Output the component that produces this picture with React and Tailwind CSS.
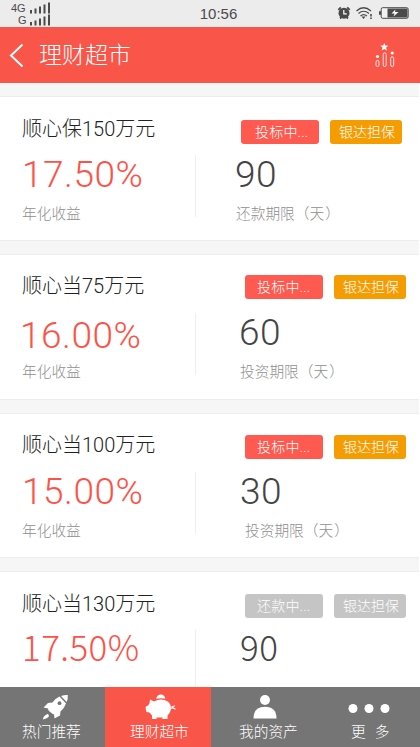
import clsx from 'clsx';

const projects = [
    {
        title: '顺心保150万元',
        rate: '17.50%',
        days: '90',
        status: '投标中...',
        term: '还款期限（天',
        card: 'h-[145px]',
        titleCls: 'pt-[17px]',
        tagsCls: 'ml-[241px] pt-[23px]',
        statusCls: 'pl-[14px]',
        rateCls: 'pl-[22px]',
        daysCls: 'pl-[39px]',
        termCls: 'pl-[40px]',
    },
    {
        title: '顺心当75万元',
        rate: '16.00%',
        days: '60',
        status: '投标中...',
        term: '投资期限（天',
        card: 'h-[146px]',
        titleCls: 'pt-[16px]',
        tagsCls: 'ml-[245px] pt-[20px]',
        statusCls: 'pl-[12px]',
        rateCls: 'pl-[20px] pt-[3px]',
        daysCls: 'pl-[43px]',
        termCls: 'pl-[44px]',
    },
    {
        title: '顺心当100万元',
        rate: '15.00%',
        days: '30',
        status: '投标中...',
        term: '投资期限（天',
        card: 'h-[145px]',
        titleCls: 'pt-[16px]',
        tagsCls: 'ml-[245px] pt-[21px]',
        statusCls: 'pl-[12px]',
        rateCls: 'pl-[22px]',
        daysCls: 'pl-[44px]',
        termCls: 'pl-[49px]',
    },
    {
        title: '顺心当130万元',
        rate: '17.50%',
        days: '90',
        status: '还款中...',
        closed: true,
        card: 'h-[145px]',
        titleCls: 'pt-[17px]',
        tagsCls: 'ml-[245px] pt-[22px]',
        statusCls: 'pl-[12px]',
        rateCls: 'pl-[22px]',
        daysCls: 'pl-[44px]',
    },
];

const SignalBars = () => (
    <svg width="21" height="12" viewBox="0 0 21 12" fill="#4a4a4a">
        <rect x="0" y="8" width="2" height="3.5" />
        <rect x="4.5" y="6.5" width="2" height="5" />
        <rect x="9" y="4.5" width="2" height="7" />
        <rect x="13.5" y="2.5" width="2" height="9" />
        <rect x="18" y="0.5" width="2" height="11" />
    </svg>
);

const StatusBar = () => (
    <div className="relative h-[27px] shrink-0 bg-[#ececec] font-['Liberation_Sans',sans-serif] text-[#4a4a4a]">
        <div className="absolute top-[2px] left-[11px] w-[40px] text-[11px] leading-[13px]">
            <div className="flex h-[12px] justify-between">
                <span>4G</span>
                <SignalBars />
            </div>
            <div className="flex h-[12px] justify-between">
                <span className="pl-[7px]">G</span>
                <SignalBars />
            </div>
        </div>
        <div className="pl-[17px] text-center text-[15px] leading-[27px]">10:56</div>
        <div className="absolute top-[6px] right-[11px] flex items-center">
            <svg width="14" height="14" viewBox="0 0 14 14">
                <path d="M1.300 3.800 3.800 1.300M12.700 3.800 10.200 1.300M3 12.500l1.500-1.500M11 12.500l-1.500-1.500" stroke="#4a4a4a" strokeWidth="1.800" />
                <circle cx="7" cy="7.2" r="5.5" fill="#4a4a4a" />
                <path d="M6.8 4v3.8h3" stroke="#fff" strokeWidth="1.2" fill="none" />
            </svg>
            <svg className="ml-[5px]" width="17" height="14" viewBox="0 0 17 14" fill="none" stroke="#4a4a4a">
                <path d="M.5 5Q7.5-1.5 15 5M2.5 7.5Q7.5 3 13 7.5M4.5 10Q7.5 7.2 11 10" strokeWidth="1.2" />
                <path d="M5.5 10.5h4l-2 2.5z" fill="#4a4a4a" stroke="none" />
                <path d="M15 8v2.5M15 11.5v1.5" strokeWidth="1.6" />
            </svg>
            <svg className="ml-[6px]" width="30" height="12" viewBox="0 0 30 12">
                <rect x="0" y="4" width="2" height="4" rx="1" fill="#4a4a4a" />
                <rect x="2.2" y=".7" width="27" height="10.6" rx="1.5" fill="#f2f2f2" stroke="#4a4a4a" strokeWidth="1" />
                <rect x="8.5" y="1.500" width="20" height="9" fill="#4a4a4a" />
                <path d="M16.500 2.500l-4 4h3l-1 3 5-4.500h-3.500z" fill="#fff" />
            </svg>
        </div>
    </div>
);

const Header = () => (
    <header className="flex h-[56px] shrink-0 items-center bg-[#f95549] text-white">
        <svg className="ml-[9px]" width="16" height="26" viewBox="0 0 16 26" fill="none" stroke="#fff" strokeWidth="2">
            <path d="M13.5 2.5 2 13.5 13.5 24.5" />
        </svg>
        <h1 className="mt-[2px] ml-[14px] text-[23px] leading-[54px] font-light">理财超市</h1>
        <svg className="mr-[25px] ml-auto" width="20" height="25" viewBox="0 0 20 25" fill="none" stroke="#fff">
            <path
                d="M9.3 0l1.1 2.5 2.9.2-2.2 1.900.8 2.900-2.600-1.600L6.700 7.500l.8-2.900-2.200-1.900 2.900-.2z"
                fill="#fff"
                stroke="none"
            />
            <circle cx="2.5" cy="13.5" r="1.6" fill="#fff" stroke="none" />
            <circle cx="17.2" cy="10" r="1.6" fill="#fff" stroke="none" />
            <g strokeOpacity=".85">
                <rect x="1" y="17.5" width="3" height="6" rx="1.5" />
                <rect x="8.2" y="9.8" width="3" height="13.7" rx="1.5" />
                <rect x="15.7" y="13.8" width="3" height="9.7" rx="1.5" />
            </g>
        </svg>
    </header>
);

const ProjectCard = ({ item }) => {
    // closed projects keep the CJK face for their figures
    const figure = item.closed
        ? "font-['Noto_Sans_CJK_SC',sans-serif] text-[35px] leading-[32px] tracking-[0.4px]"
        : "font-['Roboto',sans-serif] text-[37px] leading-[40px] tracking-[0.5px]";

    return (
        <section className={clsx('shrink-0 overflow-hidden border-y border-[#ededed] bg-white', item.card)}>
            <div className="grid h-[58px] grid-cols-1">
                <h2
                    className={clsx(
                        'col-start-1 row-start-1 pl-[22px] text-[20px] leading-[30px] font-light text-[#222]',
                        item.titleCls
                    )}
                >
                    {item.title}
                </h2>
                <div
                    className={clsx(
                        'col-start-1 row-start-1 flex gap-[11px] text-[14px] leading-[24px] font-light text-white',
                        item.tagsCls
                    )}
                >
                    <span
                        className={clsx(
                            'h-[24px] w-[78px] rounded-[3px] tracking-[0.2px]',
                            item.closed ? 'bg-[#c5c5c5]' : 'bg-[#ff5a50]',
                            item.statusCls
                        )}
                    >
                        {item.status}
                    </span>
                    <span
                        className={clsx(
                            'h-[24px] w-[72px] rounded-[3px] pl-[9px]',
                            item.closed ? 'bg-[#c5c5c5]' : 'bg-[#f59c00]'
                        )}
                    >
                        银达担保
                    </span>
                </div>
            </div>
            <div className="flex h-[62px] font-light">
                <div className="w-[196px] shrink-0 border-r border-[#efefef]">
                    <p className={clsx('h-[40px] text-[#ff5247]', figure, item.rateCls)}>{item.rate}</p>
                    {item.term && (
                        <p className="pl-[22px] text-[14.7px] leading-[39px] text-[#8f8f8f]">年化收益</p>
                    )}
                </div>
                <div>
                    <p className={clsx('h-[40px] text-[#444]', figure, item.daysCls)}>{item.days}</p>
                    {item.term && (
                        <p className={clsx('text-[14.7px] leading-[39px] text-[#8f8f8f]', item.termCls)}>
                            {item.term}
                            <span className="ml-px">）</span>
                        </p>
                    )}
                </div>
            </div>
        </section>
    );
};

const RocketIcon = () => (
    <svg width="27" height="26" viewBox="0 0 27 26" fill="#fff">
        <path d="M17.500 2.500 24 9.500Q22.500 14 18.500 17.500L18 21.500 12.500 24.500 12 20.500 10 19.500 6.500 16.500 6 14.500 1.500 13.500 6 9 10.500 8.500Q13 4.500 17.500 2.500z" />
        <path d="M19 2Q22.500 .8 25.800 1 26.100 4.500 24.600 8z" />
        <path d="M5.500 20Q7.500 20.500 6.500 23 4.500 24.800.8 25.500 1.200 21.500 5.500 20z" />
        <circle cx="17.500" cy="9.200" r="1.900" fill="#757575" />
    </svg>
);

const PigIcon = () => (
    <svg width="31" height="26" viewBox="0 0 31 26" fill="#fff">
        <path d="M11.300 4.800A4.500 4.300 0 0 1 20.300 4.800Q15.800 3.600 11.300 4.800z" />
        <path d="M5 5.500 9 7.500Q12.500 5.400 16 5.400 25.500 5.800 26 13.500 26 18 22.500 21.500V25H17.500V23.500H11.500V25H7V21.500L4.500 18.500 1.500 18Q.3 15.500.8 12.500L3.200 11.500Q3.500 10.500 4.500 9.500z" />
        <path d="M25.5 14Q28 14.500 29.500 11.500M27 12Q27.500 15 30.500 14.800" fill="none" stroke="#fff" strokeWidth="1.2" />
    </svg>
);

const PersonIcon = () => (
    <svg width="24" height="26" viewBox="0 0 24 26" fill="#fff">
        <circle cx="12" cy="6" r="5" />
        <path d="M.5 24.500Q.5 12.800 12 12.800T23.500 24.500z" />
    </svg>
);

const MoreIcon = () => (
    <svg width="42" height="26" viewBox="0 0 42 26" fill="#fff">
        <circle cx="5" cy="14.5" r="4.5" />
        <circle cx="21" cy="14.5" r="4.5" />
        <circle cx="37" cy="14.5" r="4.5" />
    </svg>
);

const tabs = [
    { label: '热门推荐', Icon: RocketIcon, cls: 'w-[105px]', iconCls: 'ml-[42px]', textCls: 'pl-[22px]' },
    { label: '理财超市', Icon: PigIcon, cls: 'w-[106px] bg-[#fa5549]', iconCls: 'ml-[40px]', textCls: 'pl-[25px]' },
    { label: '我的资产', Icon: PersonIcon, cls: 'w-[105px]', iconCls: 'ml-[42px]', textCls: 'pl-[28px]' },
    { label: '更  多', Icon: MoreIcon, cls: 'w-[104px]', iconCls: 'ml-[32px]', textCls: 'pl-[35px] [word-spacing:1px]' },
];

const TabBar = () => (
    <nav className="flex h-[60px] shrink-0 bg-[#757575] text-white">
        {tabs.map(({ label, Icon, cls, iconCls, textCls }) => (
            <div key={label} className={clsx('pt-[7px]', cls)}>
                <div className={clsx('h-[26px]', iconCls)}>
                    <Icon />
                </div>
                <p className={clsx('text-[14.7px] leading-[24px] font-light whitespace-pre', textCls)}>{label}</p>
            </div>
        ))}
    </nav>
);

const App = () => {
    return (
        <div className="flex h-[747px] w-[420px] flex-col overflow-hidden bg-white font-['Roboto','Noto_Sans_CJK_SC',sans-serif]">
            <StatusBar />
            <Header />
            <main className="mr-px flex min-h-0 flex-1 flex-col gap-[13px] overflow-hidden bg-[#f6f6f6] pt-[13px]">
                {projects.map((item) => (
                    <ProjectCard key={item.title} item={item} />
                ))}
            </main>
            <TabBar />
        </div>
    );
};

export default App;
